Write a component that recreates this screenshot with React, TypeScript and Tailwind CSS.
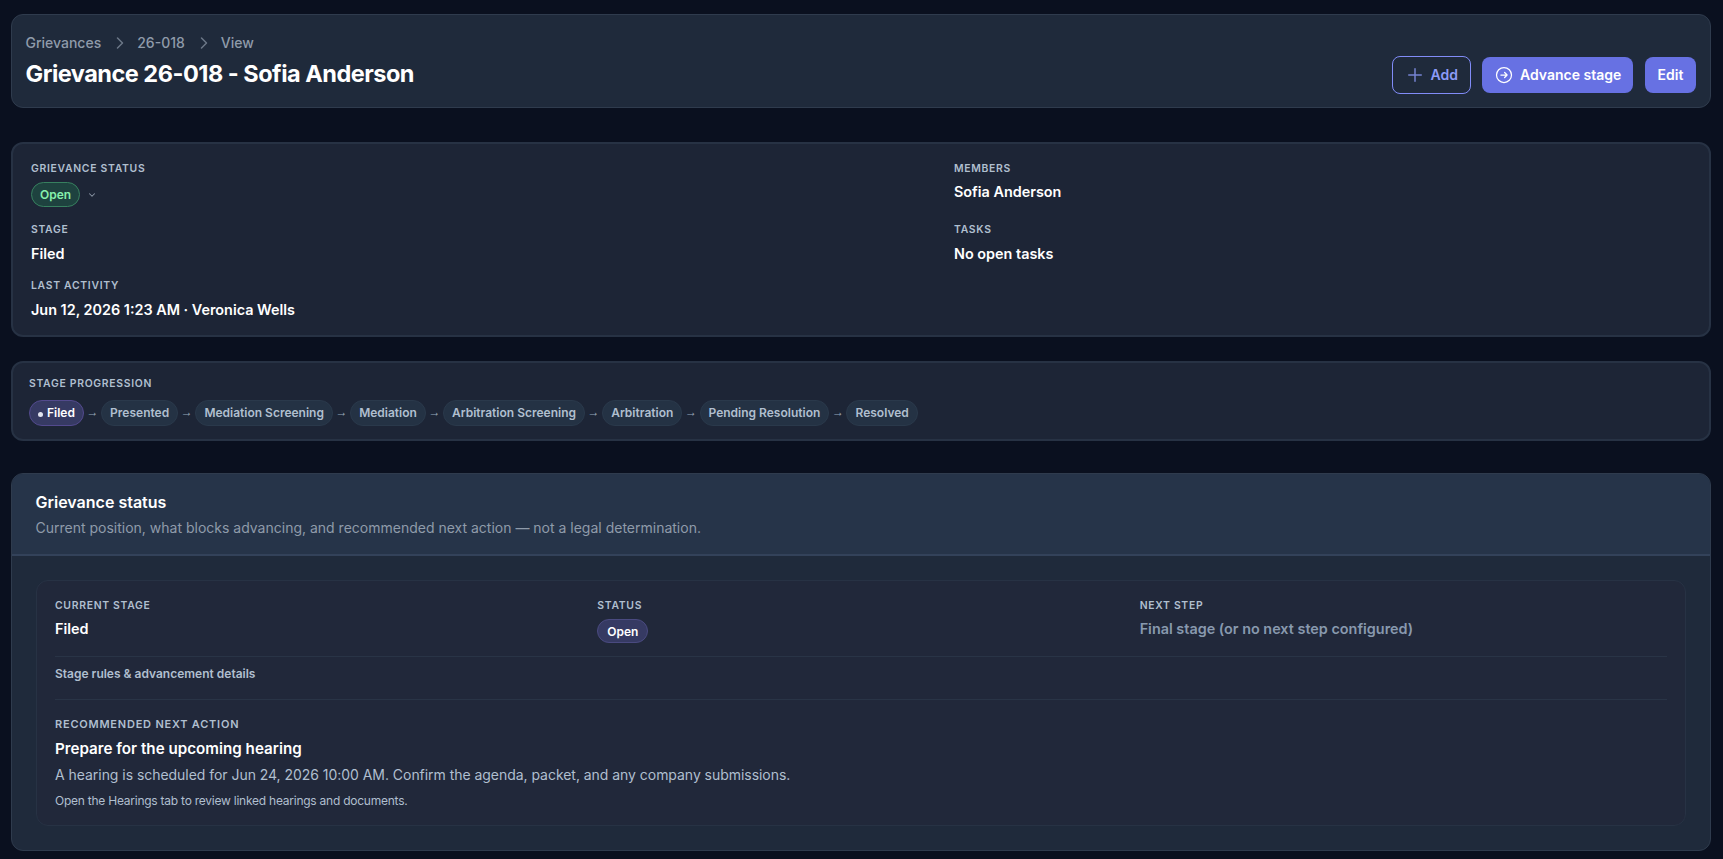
import { ChevronRight, ChevronDown } from 'lucide-react'

const STAGES = [
  'Filed',
  'Presented',
  'Mediation Screening',
  'Mediation',
  'Arbitration Screening',
  'Arbitration',
  'Pending Resolution',
  'Resolved',
]

const CRUMBS = ['Grievances', '26-018', 'View']

function Label({ children }: { children: string }) {
  return (
    <div className="h-4 text-[10.4px] leading-[18px] font-semibold tracking-[0.7px] uppercase text-[#b0bfcf]">
      {children}
    </div>
  )
}

function Header() {
  return (
    <header className="h-[94px] flex justify-between rounded-xl border border-[#2f3b4d] bg-[#1f2a3b] pl-[13.5px] pr-[14px] pt-[18px]">
      <div>
        <nav className="flex items-center text-sm leading-5 font-medium text-[#8f9baa]">
          {CRUMBS.map((crumb, i) => (
            <div key={crumb} className="flex items-center">
              {i > 0 && <ChevronRight className="w-5 h-5 ml-[9px] mr-[7px] text-[#6b7787]" strokeWidth={1.8} />}
              <span>{crumb}</span>
            </div>
          ))}
        </nav>
        <h1 className="mt-[5px] text-[23.5px] leading-8 font-bold tracking-[-0.5px] text-white">
          Grievance 26-018 - Sofia Anderson
        </h1>
      </div>

      <div className="flex items-center h-[38px] mt-[23px] text-sm font-semibold">
        <button className="flex items-center h-[38px] w-[79px] rounded-lg border border-[#818cf8] pl-3 text-[#8d9bf8]">
          <svg className="w-5 h-5 mr-[5.5px] text-[#7683d2]" viewBox="0 0 24 24" fill="none" stroke="currentColor" strokeWidth={1.8} strokeLinecap="round">
            <path d="M12 4.5v15m7.5-7.5h-15" />
          </svg>
          Add
        </button>
        <button className="ml-[11px] flex items-center h-9 w-[151px] rounded-lg bg-[#6771e3] pl-3 text-white">
          <svg className="w-5 h-5 mr-[6px]" viewBox="0 0 24 24" fill="none" stroke="currentColor" strokeWidth={1.5} strokeLinecap="round" strokeLinejoin="round">
            <path d="m12.75 15 3-3m0 0-3-3m3 3h-7.5M21 12a9 9 0 1 1-18 0 9 9 0 0 1 18 0Z" />
          </svg>
          Advance stage
        </button>
        <button className="ml-3 h-9 w-[51px] rounded-lg bg-[#6771e3] text-white">Edit</button>
      </div>
    </header>
  )
}

function Summary() {
  return (
    <section className="mt-[34px] h-[195px] grid grid-cols-[909px_1fr] gap-x-[14px] rounded-xl border-2 border-[#273244] bg-[#1d2536] px-[18px] pt-[16px]">
      <div>
        <Label>Grievance status</Label>
        <div className="mt-[6px] flex items-center">
          <span className="flex items-center justify-center h-[25px] w-[49px] rounded-full border border-[#37805f] bg-[#1e423f] text-xs font-semibold text-[#86efac]">
            Open
          </span>
          <ChevronDown className="w-[10px] h-[10px] ml-[7px] text-[#8b97a6]" strokeWidth={2.5} />
        </div>
        <div className="mt-[14px]">
          <Label>Stage</Label>
        </div>
        <div className="mt-[7px] text-[14.4px] leading-5 font-semibold text-white">Filed</div>
        <div className="mt-[13px]">
          <Label>Last activity</Label>
        </div>
        <div className="mt-[7px] text-[14.4px] leading-5 font-semibold text-white">
          Jun 12, 2026 1:23 AM · Veronica Wells
        </div>
      </div>
      <div>
        <Label>Members</Label>
        <div className="mt-[6px] text-[14.4px] leading-5 font-semibold text-white">Sofia Anderson</div>
        <div className="mt-[19px]">
          <Label>Tasks</Label>
        </div>
        <div className="mt-[7px] text-[14.4px] leading-5 font-semibold text-white">No open tasks</div>
      </div>
    </section>
  )
}

function StageProgression() {
  return (
    <section className="mt-6 h-20 rounded-xl border-2 border-[#273244] bg-[#1d2536] px-4 pt-[12px]">
      <Label>Stage progression</Label>
      <div className="mt-[9px] flex items-center text-xs font-semibold">
        {STAGES.map((stage, i) => (
          <div key={stage} className="flex items-center">
            {i > 0 && (
              <span className="flex w-[17.2px] justify-center pb-[3px] font-['Liberation_Sans',sans-serif] text-[12px] leading-4 font-normal text-[#9aa8ba]">
                →
              </span>
            )}
            {i === 0 ? (
              <span className="flex items-center h-[26px] rounded-full border border-[#534a8e] bg-[#363a63] px-2 text-white">
                <span className="mt-[2px] mr-1 h-[5px] w-[5px] rounded-full bg-[#e2e4f0]" />
                {stage}
              </span>
            ) : (
              <span className="flex items-center h-[26px] rounded-full border border-[#2a394b] bg-[#243244] px-2 text-[#b0bfcf]">
                {stage}
              </span>
            )}
          </div>
        ))}
      </div>
    </section>
  )
}

function StatusCard() {
  return (
    <section className="mt-8 h-[378px] overflow-hidden rounded-xl border border-[#2f3b4d] bg-[#1f2a3b]">
      <div className="h-[82px] border-b-2 border-[#33425a] bg-[#263449] px-[23.5px] pt-4">
        <h2 className="text-base leading-6 font-semibold text-white">Grievance status</h2>
        <p className="mt-[2px] text-sm leading-6 text-[#8f9baa]">
          Current position, what blocks advancing, and recommended next action — not a legal determination.
        </p>
      </div>

      <div className="mx-6 mt-6 h-[246px] rounded-xl border border-[#273244] bg-[#21283a] px-[18px] pt-[16px]">
        <div className="grid grid-cols-3 gap-x-[15px] h-[60px] border-b border-[#293446]">
          <div>
            <Label>Current stage</Label>
            <div className="mt-[6px] text-[14.4px] leading-5 font-semibold text-white">Filed</div>
          </div>
          <div>
            <Label>Status</Label>
            <span className="mt-[6px] flex items-center justify-center h-6 w-[51px] rounded-full border border-[#4a4a80] bg-[#363a63] pt-px text-xs font-semibold text-white">
              Open
            </span>
          </div>
          <div>
            <Label>Next step</Label>
            <div className="mt-[6px] text-[14.4px] leading-5 font-semibold text-[#8899ae]">
              Final stage (or no next step configured)
            </div>
          </div>
        </div>
        <div className="h-[43px] border-b border-[#293446] pt-[9px] text-xs leading-4 font-semibold text-[#b0bfcf]">
          Stage rules &amp; advancement details
        </div>
        <div className="pt-4">
          <div className="text-[11px] leading-4 font-semibold tracking-[0.78px] uppercase text-[#b0bfcf]">
            Recommended next action
          </div>
          <div className="mt-[5px] text-[15.2px] leading-6 font-semibold text-white">Prepare for the upcoming hearing</div>
          <p className="mt-1 text-sm leading-5 tracking-[-0.04px] text-[#b0bfcf]">
            A hearing is scheduled for Jun 24, 2026 10:00 AM. Confirm the agenda, packet, and any company submissions.
          </p>
          <p className="mt-2 text-xs leading-4 tracking-[-0.24px] text-[#b0bfcf]">
            Open the Hearings tab to review linked hearings and documents.
          </p>
        </div>
      </div>
    </section>
  )
}

export default function App() {
  return (
    <main className="h-[859px] overflow-hidden bg-[#0a101f] pl-[11px] pr-3 pt-[14px] font-['Inter',sans-serif]">
      <Header />
      <Summary />
      <StageProgression />
      <StatusCard />
    </main>
  )
}
